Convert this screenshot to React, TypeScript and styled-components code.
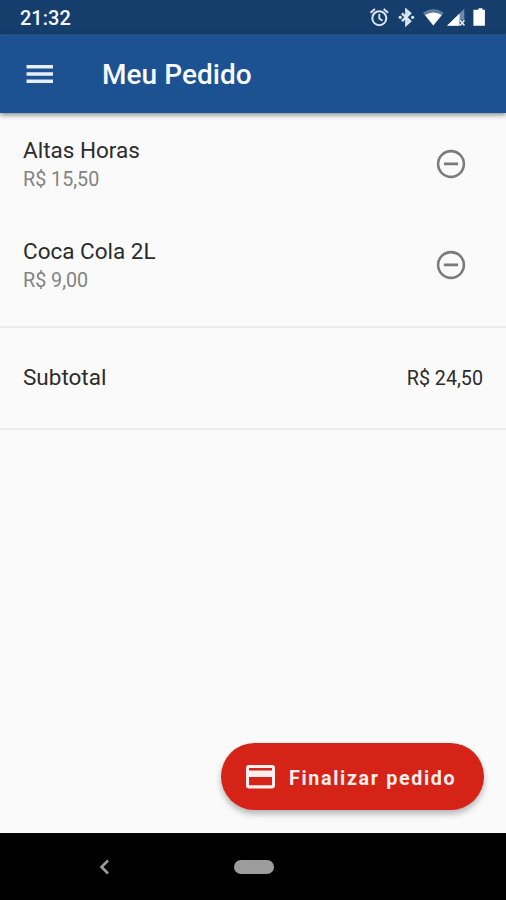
import React from 'react';
import styled, { createGlobalStyle } from 'styled-components';

const GlobalStyle = createGlobalStyle`
  * { box-sizing: border-box; }
  body { margin: 0; background: #fafafa; font-family: Roboto, "Liberation Sans", sans-serif; }
`;

const Screen = styled.div`
  width: 506px;
  height: 900px;
  display: flex;
  flex-direction: column;
  background: #fafafa;
  overflow: hidden;
`;

const StatusBar = styled.header`
  flex: none;
  height: 34px;
  padding: 2px 18px 0 20px;
  display: flex;
  align-items: center;
  justify-content: space-between;
  background: #163e6d;
  color: #f4f8fc;
`;

const Clock = styled.span`
  font-size: 20px;
  font-weight: 500;
  line-height: 24px;
`;

const StatusIcons = styled.svg`
  display: block;
`;

const AppBar = styled.div`
  flex: none;
  height: 79px;
  padding-left: 23px;
  display: flex;
  align-items: center;
  gap: 45px;
  background: #1c5192;
  box-shadow: 0 2px 5px rgba(0, 0, 0, 0.45);
`;

const IconButton = styled.button`
  display: flex;
  padding: 0;
  border: 0;
  background: none;
`;

const Title = styled.h1`
  margin: 0;
  padding-top: 2px;
  font-size: 28px;
  font-weight: 500;
  line-height: 34px;
  letter-spacing: 0.05px;
  color: #f7faff;
`;

const Content = styled.main`
  flex: 1;
  display: flex;
  flex-direction: column;
`;

const Item = styled.div`
  height: 101px;
  padding: 0 38.5px 0 23px;
  display: flex;
  align-items: center;
  justify-content: space-between;
`;

const ItemText = styled.div`
  padding-top: 3px;
  display: flex;
  flex-direction: column;
  gap: 4px;
`;

const Name = styled.span`
  font-size: 22.5px;
  line-height: 26px;
  color: #2c2c2c;
`;

const Price = styled.span<{ $strong?: boolean }>`
  font-size: 19.7px;
  line-height: 26px;
  color: ${(p) => (p.$strong ? '#2c2c2c' : '#838383')};
`;

const Divider = styled.hr`
  flex: none;
  width: 100%;
  height: 2px;
  margin: 11px 0 10px;
  border: 0;
  background: #ebebeb;
`;

const Subtotal = styled.div`
  height: 79px;
  padding: 0 23px;
  display: flex;
  align-items: center;
  justify-content: space-between;

  ${Name} { padding-bottom: 2px; }
  ${Price} { padding-top: 2px; }
`;

const Actions = styled.div`
  margin-top: auto;
  padding: 0 22px 23px;
  display: flex;
  justify-content: flex-end;
`;

const FinishButton = styled.button`
  width: 263px;
  height: 67px;
  padding: 0 0 0 23px;
  display: flex;
  align-items: center;
  gap: 12px;
  border: 0;
  border-radius: 34px;
  background: #d52317;
  box-shadow: 0 4px 6px rgba(0, 0, 0, 0.28);
  color: #ffeeee;
  font-family: inherit;
  font-size: 19.7px;
  font-weight: 700;
  letter-spacing: 1.65px;
  white-space: nowrap;
`;

const FinishLabel = styled.span`
  padding-top: 3px;
`;

const NavBar = styled.nav`
  flex: none;
  height: 67px;
  padding-left: 99px;
  display: flex;
  align-items: center;
  background: #000;
`;

const HomePill = styled.span`
  width: 40px;
  height: 14px;
  margin-left: 123.5px;
  border-radius: 7px;
  background: #9c9c9c;
`;

const items = [
  { name: 'Altas Horas', price: 'R$ 15,50' },
  { name: 'Coca Cola 2L', price: 'R$ 9,00' },
];

function Indicators() {
  return (
    <StatusIcons width="120" height="22" viewBox="0 0 120 22">
      <g fill="none" stroke="#dbe6f2" strokeWidth="2">
        <circle cx="11.3" cy="11.2" r="7" />
        <path d="M11.3 7v4.6l3.2 2.2" strokeWidth="1.8" />
        <path d="M2.5 5.8l4.4-3.7M20.1 5.8l-4.4-3.7" />
        <path d="M34 6.4l8 7.8-3.6 3.2V3.2l3.6 3.2-8 7.8" strokeWidth="2.5" />
      </g>
      <circle cx="32.2" cy="10.3" r="1.6" fill="#dbe6f2" />
      <circle cx="44.6" cy="10.3" r="1.6" fill="#dbe6f2" />
      <path d="M54.8 5.7Q65.3-1.5 75.8 5.7L65.3 18.5z" fill="#5e7d9f" />
      <path d="M57 8Q65.3 3 73.8 8L65.3 18.5z" fill="#fff" />
      <path d="M79 18.7L96.3 1.8V18.7z" fill="#6f8aa9" />
      <path d="M79 18.7L91.5 6.4V18.7z" fill="#fff" />
      <path d="M91.8 12.8h5v6.5h-5z" fill="#163e6d" />
      <path d="M92 13.3l4.4 5.2M96.4 13.3l-4.4 5.2" stroke="#e7eff7" strokeWidth="1.6" />
      <path d="M110.5 1.2h4v1.6h2.4v16h-11.5V2.8h5.1z" fill="#fff" />
    </StatusIcons>
  );
}

function RemoveIcon() {
  return (
    <svg width="34" height="34" viewBox="0 0 24 24" fill="#7b7b7b">
      <path d="M7 11v1.8h10V11zm5-9a10 10 0 1 0 0 20 10 10 0 0 0 0-20zm0 18.2a8.2 8.2 0 1 1 0-16.4 8.2 8.2 0 0 1 0 16.4z" />
    </svg>
  );
}

export default function App() {
  return (
    <>
      <GlobalStyle />
      <Screen>
        <StatusBar>
          <Clock>21:32</Clock>
          <Indicators />
        </StatusBar>
        <AppBar>
          <IconButton aria-label="Menu">
            <svg width="34" height="34" viewBox="0 0 34 34" fill="#e6eef8">
              <path d="M3.5 8h26.5v3.5h-26.5zM3.5 15.2h26.5v3.5h-26.5zM3.5 22.4h26.5v3.5h-26.5z" />
            </svg>
          </IconButton>
          <Title>Meu Pedido</Title>
        </AppBar>
        <Content>
          {items.map((item) => (
            <Item key={item.name}>
              <ItemText>
                <Name>{item.name}</Name>
                <Price>{item.price}</Price>
              </ItemText>
              <IconButton aria-label={`Remover ${item.name}`}>
                <RemoveIcon />
              </IconButton>
            </Item>
          ))}
          <Divider />
          <Subtotal>
            <Name>Subtotal</Name>
            <Price $strong>R$ 24,50</Price>
          </Subtotal>
          <Divider />
          <Actions>
            <FinishButton>
              <svg width="33" height="33" viewBox="0 0 33 33">
                <path
                  fill="#ffeeee"
                  fillRule="evenodd"
                  d="M5 5h23a3 3 0 0 1 3 3v17.500a3 3 0 0 1-3 3H5a3 3 0 0 1-3-3V8a3 3 0 0 1 3-3zM5 8v2.600h23V8zM5 17v8.300h23V17z"
                />
              </svg>
              <FinishLabel>Finalizar pedido</FinishLabel>
            </FinishButton>
          </Actions>
        </Content>
        <NavBar>
          <svg width="11" height="16" viewBox="0 0 11 16" fill="none" stroke="#9c9c9c" strokeWidth="2.6">
            <path d="M9 1.5L2.5 8L9 14.5" />
          </svg>
          <HomePill />
        </NavBar>
      </Screen>
    </>
  );
}
